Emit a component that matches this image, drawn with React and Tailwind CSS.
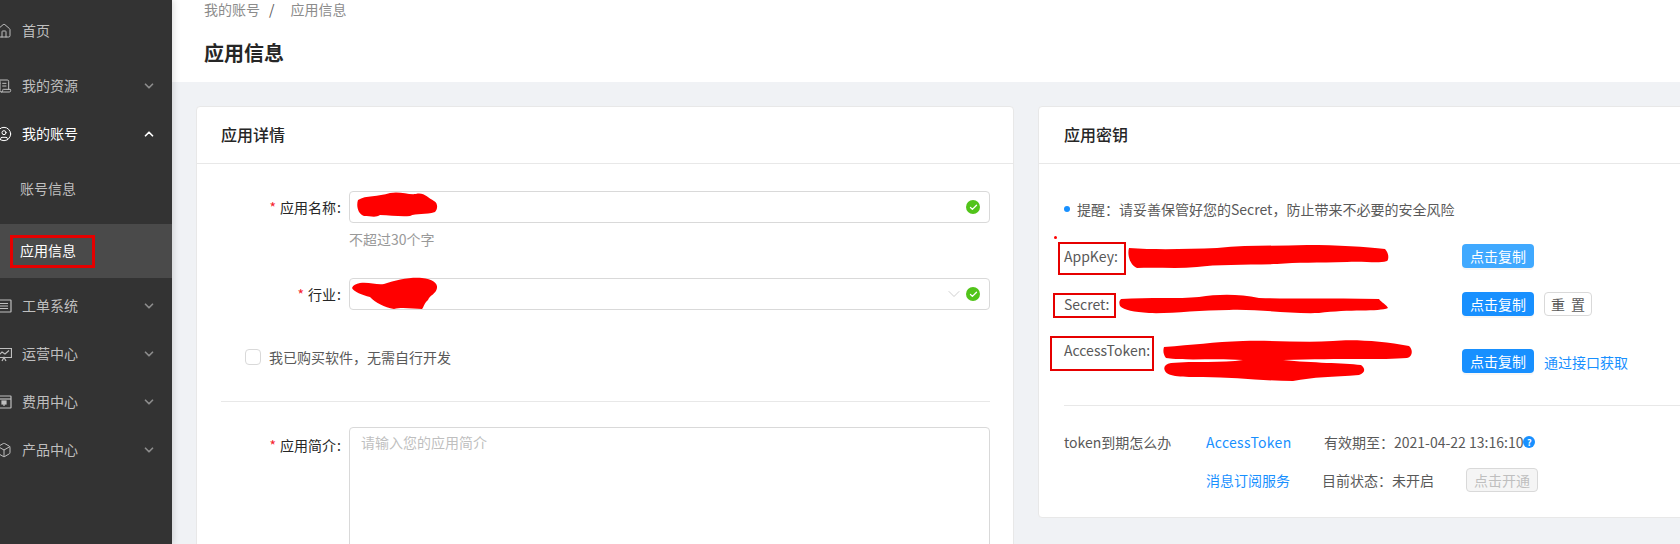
import React from "react";
import { House, ScrollText, CircleUser, ChevronDown, ChevronUp, Check, Box } from "lucide-react";

const FONT = "font-['Noto_Sans_CJK_SC','Noto_Sans',sans-serif]";

// 侧栏里 lucide 没有对应样式的图标
const TicketIcon = ({ className }) => (
  <svg className={className} width="16" height="16" viewBox="0 0 16 16" fill="none" stroke="currentColor" strokeWidth="1.2">
    <rect x="1" y="2" width="14" height="12" rx="0.5" />
    <path d="M4 5.5H12M4 8H12M4 10.5H12" />
  </svg>
);

const OpsIcon = ({ className }) => (
  <svg className={className} width="16" height="16" viewBox="0 0 16 16" fill="none" stroke="currentColor" strokeWidth="1.2">
    <path d="M0.5 2.5H15.5V11.5H0.5Z" />
    <path d="M3 9L6 6L9 8L13 4.5M6 15L8 11.5L10 15" />
  </svg>
);

const BillIcon = ({ className }) => (
  <svg className={className} width="16" height="16" viewBox="0 0 16 16" fill="none" stroke="currentColor" strokeWidth="1.2">
    <rect x="1" y="2" width="14" height="12" rx="0.5" />
    <path d="M1 5H15" />
    <rect x="6" y="7" width="4" height="3" fill="currentColor" />
    <path d="M8 10V12" />
  </svg>
);

const MenuItem = ({ icon: Icon, label, open, bright, className = "" }) => (
  <div className={`flex h-12 items-center pr-4 ${className}`}>
    <Icon size={16} strokeWidth={1.5} className={`-ml-[4px] shrink-0 ${bright ? "text-white" : "text-[#bfbfbf]"}`} />
    <span className={`-mt-[2px] ml-[10px] flex-1 text-sm ${bright ? "text-white" : "text-[#bfbfbf]"}`}>{label}</span>
    {open === true && <ChevronUp size={14} strokeWidth={3} className="text-white" />}
    {open === false && <ChevronDown size={14} strokeWidth={3} className="text-[#8c8c8c]" />}
  </div>
);

const Sidebar = () => (
  <aside className="relative z-10 h-[544px] w-[172px] shrink-0 overflow-hidden bg-[#333333] shadow-[2px_0_6px_rgba(0,0,0,0.12)]">
    <MenuItem icon={House} label="首页" className="mt-[7px]" />
    <MenuItem icon={ScrollText} label="我的资源" open={false} className="mt-[7px]" />
    <MenuItem icon={CircleUser} label="我的账号" open={true} bright />
    <div className="mt-1 flex h-[54px] items-center pb-[2px] pl-5 text-sm text-[#bfbfbf]">账号信息</div>
    <div className="relative mt-2 flex h-[54px] items-center bg-[#4a4a4a] pb-[2px] pl-5 text-sm text-white">
      应用信息
      <div className="absolute left-[10px] top-[11px] h-[33px] w-[85px] border-[3px] border-[#e60000]" />
    </div>
    <MenuItem icon={TicketIcon} label="工单系统" open={false} className="mt-1" />
    <MenuItem icon={OpsIcon} label="运营中心" open={false} />
    <MenuItem icon={BillIcon} label="费用中心" open={false} />
    <MenuItem icon={Box} label="产品中心" open={false} />
  </aside>
);

const Scribble = ({ className, w, h, d }) => (
  <svg className={`absolute ${className}`} width={w} height={h} viewBox={`0 0 ${w} ${h}`}>
    <path d={d} fill="#ff0000" />
  </svg>
);

const Valid = () => (
  <span className="flex h-[14px] w-[14px] items-center justify-center rounded-full bg-[#52c41a]">
    <Check size={9} strokeWidth={3.5} className="text-white" />
  </span>
);

const FieldLabel = ({ children, className = "" }) => (
  <label className={`w-[152px] shrink-0 pr-2 text-right text-sm leading-8 text-[#262626] ${className}`}>
    <span className="mr-1 text-[#f5222d]">*</span>
    {children}
    <span className="ml-px">:</span>
  </label>
);

const DetailCard = () => (
  <section className="h-[600px] w-[818px] shrink-0 rounded-sm border border-[#e8e8e8] bg-white">
    <h2 className="flex h-[57px] items-center border-b border-[#e8e8e8] pb-[2px] pl-6 text-base font-medium text-[#262626]">应用详情</h2>
    <div className="px-6 pt-[27px]">
      <div className="-ml-6 flex w-[793px]">
        <FieldLabel>应用名称</FieldLabel>
        <div className="relative flex h-8 flex-1 items-center justify-end rounded border border-[#d9d9d9] pr-[9px]">
          <Scribble
            className="left-[6px] top-0"
            w={82}
            h={26}
            d="M2 8C10 3 22 5 34 1C44 -1 52 3 60 2C68 0 72 6 78 9C82 11 82 17 79 20C70 23 60 21 54 24C44 25 34 23 24 23C20 26 14 24 8 24C2 22 0 14 2 8Z"
          />
          <Valid />
        </div>
      </div>
      <p className="ml-[128px] mt-[5px] text-sm leading-[22px] text-[#999999]">不超过30个字</p>
      <div className="-ml-6 mt-7 flex w-[793px]">
        <FieldLabel>行业</FieldLabel>
        <div className="relative flex h-8 flex-1 items-center justify-end gap-[2px] rounded border border-[#d9d9d9] pr-[9px]">
          <Scribble
            className="left-[2px] -top-[2px]"
            w={86}
            h={34}
            d="M8 6C18 5 24 8 32 7C44 3 58 0 70 1C80 2 86 6 85 11C84 17 78 18 76 23C72 26 72 30 70 32C62 32 50 30 42 32C32 30 24 26 18 20C10 18 2 15 0 11C1 8 4 7 8 6Z"
          />
          <ChevronDown size={20} strokeWidth={0.9} className="text-[#bfbfbf]" />
          <Valid />
        </div>
      </div>
      <div className="ml-6 mt-[39px] flex items-center">
        <span className="h-4 w-4 rounded-sm border border-[#d9d9d9] bg-white" />
        <span className="ml-2 text-sm leading-4 text-[#595959]">我已购买软件，无需自行开发</span>
      </div>
      <div className="mt-9 h-px w-[769px] bg-[#e8e8e8]" />
      <div className="-ml-6 mt-[25px] flex w-[793px]">
        <FieldLabel className="pt-[2px]">应用简介</FieldLabel>
        <textarea
          placeholder="请输入您的应用简介"
          className="h-[200px] flex-1 resize-none rounded border border-[#d9d9d9] px-[11px] py-[3px] text-sm leading-[22px] outline-none placeholder:text-[#bfbfbf]"
        />
      </div>
    </div>
  </section>
);

const CopyButton = ({ light }) => (
  <button className={`h-6 w-[72px] rounded text-sm leading-6 text-white shadow-[0_2px_0_rgba(0,0,0,0.03)] ${light ? "bg-[#40a9ff]" : "bg-[#1890ff]"}`}>
    点击复制
  </button>
);

const KeyCard = () => (
  <section className="h-[412px] w-[700px] shrink-0 rounded-sm border border-[#e8e8e8] bg-white">
    <h2 className="flex h-[57px] items-center border-b border-[#e8e8e8] pb-[2px] pl-[25px] text-base font-medium text-[#262626]">应用密钥</h2>
    <div className="pl-[25px] pt-[34px] text-sm leading-[22px] text-[#595959]">
      <div className="flex items-center">
        <span className="mr-[7px] h-[6px] w-[6px] rounded-full bg-[#1890ff]" />
        提醒：请妥善保管好您的Secret，防止带来不必要的安全风险
      </div>

      <div className="relative mt-6 flex h-6 items-center">
        <span className="absolute -left-[10px] -top-[8px] h-[3px] w-[3px] rounded-full bg-[#ff0000]" />
        <span className="absolute -left-[6px] -top-[2px] h-[33px] w-[68px] border-2 border-[#e60000]" />
        <span className="w-[398px] shrink-0">AppKey:</span>
        <Scribble
          className="left-[63px] top-[1px]"
          w={262}
          h={24}
          d="M2 3C30 5 60 4 90 3C120 0 150 1 180 0C210 0 240 2 258 4C262 8 262 14 260 16C250 19 240 16 220 17C190 18 170 17 150 19C120 20 90 19 70 22C50 24 30 22 10 23C3 20 0 10 2 3Z"
        />
        <CopyButton light />
      </div>

      <div className="relative mt-6 flex h-6 items-center">
        <span className="absolute -left-[11px] top-[1px] h-[25px] w-[63px] border-2 border-[#e60000]" />
        <span className="w-[398px] shrink-0">Secret:</span>
        <Scribble
          className="left-[55px] top-[2px]"
          w={270}
          h={21}
          d="M2 5C30 3 60 5 80 3C100 0 120 0 140 4C170 5 210 4 260 5C262 8 268 11 269 14C260 18 230 15 200 19C170 20 140 15 110 16C80 16 50 20 30 19C15 18 5 16 1 12C0 9 0 7 2 5Z"
        />
        <CopyButton />
        <button className="ml-[10px] h-6 w-12 rounded border border-[#d9d9d9] bg-white text-sm leading-5 text-[#595959] [word-spacing:3px]">重 置</button>
      </div>

      <div className="relative mt-[23px] flex h-11 items-start">
        <span className="absolute -left-[14px] -top-[3px] h-[35px] w-[104px] border-2 border-[#e60000]" />
        <span className="w-[398px] shrink-0">AccessToken:</span>
        <Scribble
          className="left-[99px] top-0"
          w={250}
          h={43}
          d="M1 8C30 6 50 3 80 2C110 1 140 4 170 2C190 0 220 2 246 7C250 10 250 18 244 19C220 21 180 19 120 21C150 24 180 24 198 26C203 30 202 34 196 36C170 38 150 38 130 42C100 42 70 38 40 38C20 38 5 38 2 32C0 28 2 25 8 24C30 22 60 24 80 21C50 19 25 22 3 19C0 15 0 11 1 8Z"
        />
        <div className="mt-[10px]">
          <CopyButton />
        </div>
        <a className="ml-[10px] mt-3 text-[#1890ff]">通过接口获取</a>
      </div>

      <div className="mt-[22px] h-px bg-[#e8e8e8]" />

      <div className="mt-[25px] flex items-center">
        <span className="w-[142px] shrink-0">token到期怎么办</span>
        <a className="w-[118px] shrink-0 tracking-[0.3px] text-[#1890ff]">AccessToken</a>
        <span>有效期至：2021-04-22 13:16:10</span>
        <span className="flex h-3 w-3 items-center justify-center rounded-full bg-[#1890ff] text-[9px] font-bold leading-none text-white">?</span>
      </div>

      <div className="mt-[15px] flex h-6 items-center">
        <a className="ml-[142px] w-[116px] shrink-0 text-[#1890ff]">消息订阅服务</a>
        <span>目前状态：未开启</span>
        <button className="ml-8 h-6 w-[72px] rounded border border-[#d9d9d9] bg-[#f5f5f5] text-sm leading-5 text-[#bfbfbf]">点击开通</button>
      </div>
    </div>
  </section>
);

export default function App() {
  return (
    <div className={`flex h-[544px] w-[1680px] overflow-hidden bg-[#f0f2f5] ${FONT}`}>
      <Sidebar />
      <main className="min-w-0 flex-1 overflow-hidden">
        <header className="h-[82px] bg-white pl-8">
          <div className="text-sm leading-[18px] text-[#8c8c8c]">
            我的账号<span className="mx-[9px] text-[#595959]">/</span><span className="ml-[7px]">应用信息</span>
          </div>
          <h1 className="mt-[21px] text-xl font-semibold leading-7 text-[#262626]">应用信息</h1>
        </header>
        <div className="flex gap-6 pl-6 pt-6">
          <DetailCard />
          <KeyCard />
        </div>
      </main>
    </div>
  );
}
